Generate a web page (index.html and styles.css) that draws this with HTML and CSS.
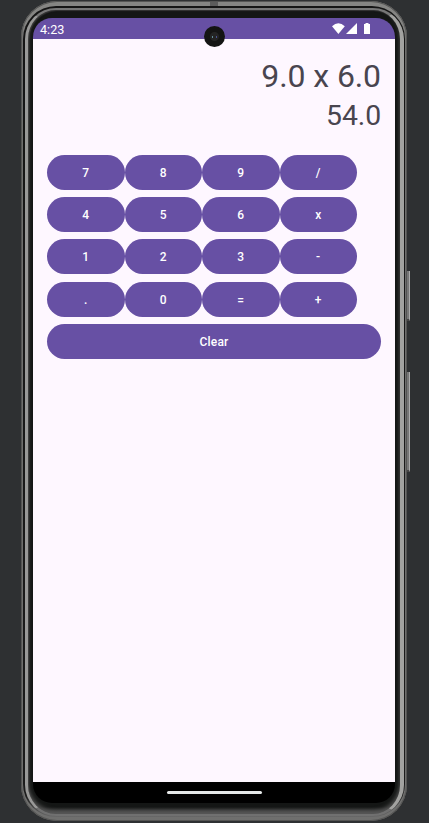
FILE: index.html
```html
<!DOCTYPE html>
<html lang="en">
<head>
<meta charset="utf-8">
<title>Calculator</title>
<link rel="stylesheet" href="styles.css">
</head>
<body>
<div class="phone">
  <span class="side-key power"></span>
  <span class="side-key volume"></span>
  <span class="antenna"></span>
  <div class="rim">
    <div class="bezel">
      <div class="screen">
        <header class="status">
          <span class="time">4:23</span>
          <svg class="status-icons" width="40" height="13" viewBox="0 0 40 13" fill="#fff">
            <path d="M0 3.200Q6.400-2.600 12.800 3.200L6.400 11Z"/>
            <path d="M25 0V11H14Z"/>
            <path d="M33.500 0h3v1H38v10h-6V1h1.500Z"/>
          </svg>
        </header>
        <main class="app">
          <div class="expression">9.0 x 6.0</div>
          <div class="result">54.0</div>
          <div class="keys">
            <button>7</button><button>8</button><button>9</button><button>/</button>
            <button>4</button><button>5</button><button>6</button><button>x</button>
            <button>1</button><button>2</button><button>3</button><button>-</button>
            <button>.</button><button>0</button><button>=</button><button>+</button>
          </div>
          <button class="clear">Clear</button>
        </main>
        <footer class="nav"><span class="handle"></span></footer>
      </div>
    </div>
  </div>
  <span class="camera"></span>
</div>
</body>
</html>
```
FILE: styles.css
```css
* { box-sizing: border-box; }
body {
  margin: 0;
  height: 823px;
  overflow: hidden;
  background: #2e3032;
  font-family: Roboto, sans-serif;
}
.phone {
  position: relative;
  width: 386px;
  height: 820px;
  margin: 1px 0 0 21px;
  padding: 5px 2px 4px;
  border-radius: 36px;
  background: linear-gradient(#858583 0, #858583 20px, #6f6f6e 40px, #6f6f6e);
  box-shadow: inset 0 0 0 1px #555554;
}
.rim {
  height: 811px;
  padding: 2px 1px 1px 2px;
  border-radius: 33px;
  background: linear-gradient(#151515 0, #1c1c1c 790px, #686868 100%);
}
.bezel {
  height: 808px;
  padding: 8px 5px 11px;
  border: solid;
  border-width: 2px 4px 2px 3px;
  border-color: #777 #a2a2a0 #707070 #999998;
  border-radius: 31px;
  background: linear-gradient(#141615 0, #141615 797px, #555 100%);
  background-clip: padding-box;
  box-shadow: inset 0 -3px 4px #555, inset 1px 1px 1px #333;
}
.screen {
  display: flex;
  flex-direction: column;
  width: 362px;
  height: 785px;
  overflow: hidden;
  border-radius: 19px;
}
.status {
  display: flex;
  justify-content: space-between;
  height: 21px;
  padding: 5px 23px 0 7px;
  background: #6750a4;
  color: #fff;
}
.time { font-size: 12.6px; line-height: 13px; }
.app {
  flex: 1;
  padding: 16px 14px 0;
  background: #fef7ff;
  color: #49454f;
  text-align: right;
}
.expression { height: 43px; font-size: 32px; line-height: 43px; letter-spacing: -.1px; }
.result { height: 36px; font-size: 28.4px; line-height: 36px; letter-spacing: -.1px; }
.keys {
  display: grid;
  grid-template-columns: repeat(4, 77.5px);
  gap: 7.2px 0;
  margin: 21px 0 7px;
}
button {
  height: 35px;
  padding: 1px 0 0;
  border: 0;
  border-radius: 18px;
  background: #6750a4;
  color: #fff;
  font: 500 12px/35px Roboto, sans-serif;
  letter-spacing: .2px;
}
.clear { display: block; width: 100%; }
.nav { height: 21px; padding-top: 9px; background: #000; }
.handle { display: block; width: 95px; height: 3px; margin: 0 auto; border-radius: 2px; background: #e5e8e8; }
.camera {
  position: absolute;
  left: 183px;
  top: 25px;
  width: 21px;
  height: 21px;
  border-radius: 50%;
  background: radial-gradient(circle at 8.5px 11px, #62909a 0 .6px, transparent 1.1px), radial-gradient(circle at 12.5px 11px, #4a5290 0 .6px, transparent 1.1px), radial-gradient(circle, #242424 0 4px, #141414 5px);
}
.side-key { position: absolute; left: 386px; width: 3px; background: #777; border-right: 1px solid #aaa; border-bottom: 2px solid #444; }
.power { top: 270px; height: 50px; }
.volume { top: 371px; height: 100px; }
.antenna { position: absolute; left: 189px; top: 1px; width: 8px; height: 4px; background: #5c5c5c; z-index: 1; }
```
